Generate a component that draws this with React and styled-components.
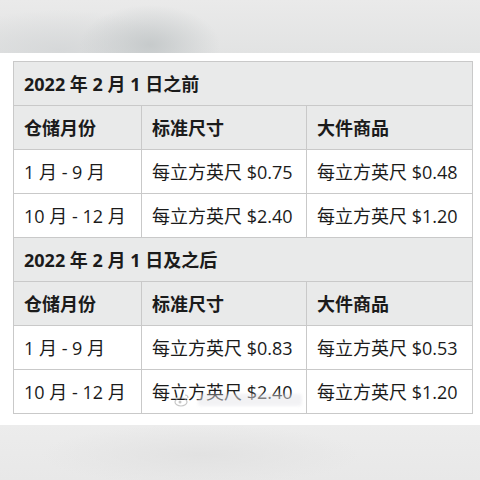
import React from 'react'
import styled, { createGlobalStyle } from 'styled-components'

const GlobalStyle = createGlobalStyle`
  html, body {
    margin: 0;
    padding: 0;
    background: #ffffff;
  }
  body {
    font-family: "Open Sans", "Noto Sans CJK SC", sans-serif;
  }
`

const Page = styled.div`
  display: flex;
  flex-direction: column;
  height: 480px;
  width: 480px;
  overflow: hidden;
`
const TopBand = styled.div`
  flex: 0 0 53px;
  background:
    radial-gradient(ellipse 70px 40px at 150px 45px, #c6cacb 0%, rgba(200, 204, 205, 0) 100%),
    radial-gradient(ellipse 120px 40px at 60px 50px, #d6d8d9 0%, rgba(214, 216, 217, 0) 100%),
    linear-gradient(180deg, #eaeaea 0%, #e2e3e3 100%);
`
const Sheet = styled.div`
  flex: 1;
  background: #ffffff;
  padding: 8px 8px 0 13px;
  position: relative;
`
const Table = styled.table`
  border-collapse: collapse;
  width: 459px;
  table-layout: fixed;
  color: #1b1b1b;
  font-size: 18px;
`
const Cell = styled.td`
  height: 43px;
  padding: 0 0 0 10px;
  border: 1px solid #c9c9c9;
  background: ${props => props.shaded ? '#e9eaea' : '#ffffff'};
  font-weight: ${props => props.bold ? 700 : 400};
  white-space: nowrap;
  line-height: 1;
`
const Watermark = styled.div`
  position: absolute;
  left: 174px;
  top: 340px;
  display: flex;
  align-items: center;
  gap: 8px;
  opacity: 0.55;
`
const WatermarkText = styled.div`
  width: 104px;
  height: 12px;
  border-radius: 3px;
  background: rgba(230, 230, 234, 0.9);
  filter: blur(1.5px);
`
const BottomBand = styled.div`
  flex: 0 0 55px;
  background:
    radial-gradient(ellipse 160px 30px at 200px 30px, #e2e2e2 0%, rgba(226, 226, 226, 0) 100%),
    linear-gradient(180deg, #ececec 0%, #e8e8e8 100%);
`

const sections = [
  {
    title: '2022 年 2 月 1 日之前',
    rows: [
      ['1 月 - 9 月', '每立方英尺 $0.75', '每立方英尺 $0.48'],
      ['10 月 - 12 月', '每立方英尺 $2.40', '每立方英尺 $1.20']
    ]
  },
  {
    title: '2022 年 2 月 1 日及之后',
    rows: [
      ['1 月 - 9 月', '每立方英尺 $0.83', '每立方英尺 $0.53'],
      ['10 月 - 12 月', '每立方英尺 $2.40', '每立方英尺 $1.20']
    ]
  }
]

const headers = ['仓储月份', '标准尺寸', '大件商品']

function App () {
  return (
    <>
      <GlobalStyle />
      <Page>
        <TopBand />
        <Sheet>
          <Table>
            <colgroup>
              <col style={{ width: 128 }} />
              <col style={{ width: 165 }} />
              <col style={{ width: 166 }} />
            </colgroup>
            <tbody>
              {sections.map(section => (
                <React.Fragment key={section.title}>
                  <tr>
                    <Cell shaded bold colSpan={3}>{section.title}</Cell>
                  </tr>
                  <tr>
                    {headers.map(h => <Cell key={h} shaded bold>{h}</Cell>)}
                  </tr>
                  {section.rows.map(row => (
                    <tr key={row[0]}>
                      {row.map((v, i) => <Cell key={i}>{v}</Cell>)}
                    </tr>
                  ))}
                </React.Fragment>
              ))}
            </tbody>
          </Table>
          <Watermark>
            <svg width='16' height='14' viewBox='0 0 16 14'>
              <ellipse cx='7' cy='9' rx='6' ry='4' fill='none' stroke='#999' strokeWidth='1.2' />
              <circle cx='6' cy='9' r='1.5' fill='#999' />
              <path d='M11 2 a3 3 0 0 1 3 3' fill='none' stroke='#999' strokeWidth='1.2' />
            </svg>
            <WatermarkText />
          </Watermark>
        </Sheet>
        <BottomBand />
      </Page>
    </>
  )
}

export default App
